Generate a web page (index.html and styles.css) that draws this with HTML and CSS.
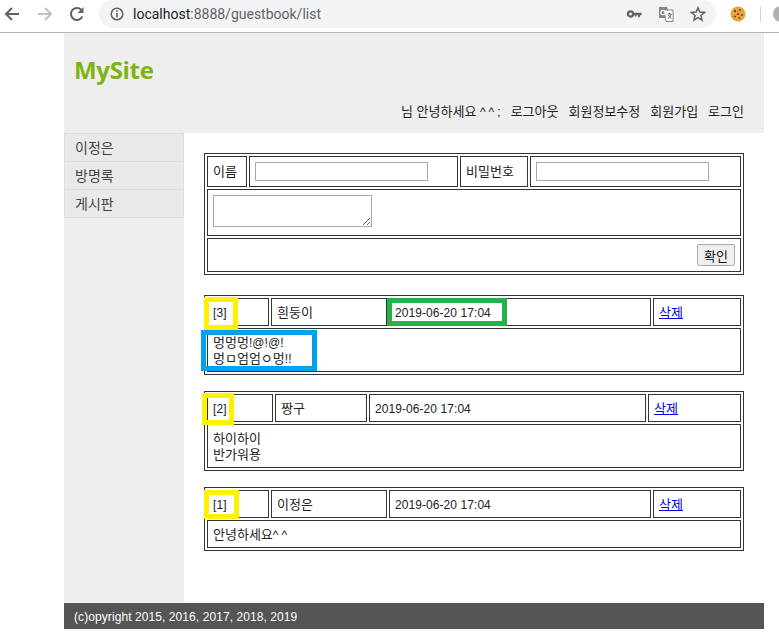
FILE: index.html
```html
<!DOCTYPE html>
<html lang="ko">
<head>
    <meta charset="UTF-8">
    <title>MySite</title>
    <link rel="stylesheet" href="styles.css">
</head>
<body>
    <div class="toolbar">
        <svg class="tool-icon back" width="16" height="16" viewBox="0 0 16 16"><path d="M15 8H2.500M8 2L2 8l6 6" fill="none" stroke="#5f6368" stroke-width="2"/></svg>
        <svg class="tool-icon forward" width="16" height="16" viewBox="0 0 16 16"><path d="M1 8h12.500M8 2l6 6-6 6" fill="none" stroke="#bdc1c6" stroke-width="2"/></svg>
        <svg class="tool-icon reload" width="16" height="16" viewBox="0 0 16 16"><path d="M13.400 10.500A6 6 0 1 1 12.200 3.700" fill="none" stroke="#5f6368" stroke-width="2"/><path d="M14.500 1v6h-6z" fill="#5f6368"/></svg>
        <div class="address">
            <svg class="info" width="16" height="16" viewBox="0 0 16 16"><circle cx="8" cy="8" r="5.800" fill="none" stroke="#5f6368" stroke-width="1.500"/><path d="M7.200 7h1.600v4.200H7.200zM7.200 4.600h1.600v1.500H7.200z" fill="#5f6368"/></svg>
            <span class="url"><span class="host">localhost</span>:8888/guestbook/list</span>
            <svg class="addr-icon key" width="16" height="16" viewBox="0 0 16 16"><circle cx="4.500" cy="8" r="2.600" fill="none" stroke="#5f6368" stroke-width="2.200"/><path d="M7 6.800h8.500v2.400h-1.600v2h-1.800v-2H10.400v1.400H8.800V9.200H7z" fill="#5f6368"/></svg>
            <svg class="addr-icon translate" width="16" height="16" viewBox="0 0 16 16"><path d="M1 1h8l1 2.500V12H1z" fill="#80868b"/><path d="M6 4h9v11.500H8z" fill="#fff" stroke="#80868b"/><circle cx="5" cy="6.500" r="2.200" fill="none" stroke="#fff" stroke-width="1.200"/><path d="M9.500 8h4M11.500 7v1M10 12.500c2-1 3-2.500 3-4.500M10.500 9c.5 1.500 1.500 2.500 3 3.500" fill="none" stroke="#5f6368"/></svg>
            <svg class="addr-icon star" width="16" height="16" viewBox="0 0 16 16"><path d="M8 1.800l1.800 4.300 4.700.4-3.600 3 1.100 4.600L8 11.700l-4 2.400 1.100-4.600-3.600-3 4.700-.4z" fill="none" stroke="#5f6368" stroke-width="1.500"/></svg>
        </div>
        <svg class="cookie" width="16" height="16" viewBox="0 0 16 16"><circle cx="8" cy="8" r="7.500" fill="#e8a33d"/><circle cx="5" cy="5" r="1.200" fill="#7a4a1c"/><circle cx="10" cy="4" r="1" fill="#7a4a1c"/><circle cx="8" cy="8" r="1.100" fill="#7a4a1c"/><circle cx="12" cy="9" r="1.100" fill="#7a4a1c"/><circle cx="5" cy="10.500" r="1.100" fill="#7a4a1c"/><circle cx="9.500" cy="12" r="1" fill="#7a4a1c"/></svg>
        <span class="divider"></span>
        <span class="avatar"></span>
    </div>

    <div class="container">
        <div class="header">
            <h1>MySite</h1>
            <ul class="user-menu">
                <li>님 안녕하세요 <span class="latin caret">^^</span><span class="latin">;</span></li>
                <li>로그아웃</li>
                <li>회원정보수정</li>
                <li>회원가입</li>
                <li>로그인</li>
            </ul>
        </div>

        <div class="wrapper">
            <ul class="navigation">
                <li>이정은</li>
                <li>방명록</li>
                <li>게시판</li>
            </ul>

            <div class="content">
                <form class="write-form">
                    <table class="board">
                        <tr class="row-input">
                            <td class="f-name">이름</td>
                            <td class="f-name-val"><input type="text" class="field"></td>
                            <td class="f-pass">비밀번호</td>
                            <td class="f-pass-val"><input type="password" class="field"></td>
                        </tr>
                        <tr class="row-text">
                            <td colspan="4"><textarea class="message"></textarea></td>
                        </tr>
                        <tr class="row-submit">
                            <td colspan="4" class="submit-cell"><button type="button" class="submit">확인</button></td>
                        </tr>
                    </table>
                </form>

                <ul class="entries">
                    <li class="entry">
                        <table class="board">
                            <tr>
                                <td class="c-no latin">[3]</td>
                                <td class="c-name">흰둥이</td>
                                <td class="c-date latin">2019-06-20 17:04</td>
                                <td class="c-del"><a href="#">삭제</a></td>
                            </tr>
                            <tr class="row-two">
                                <td colspan="4">멍멍멍<span class="latin">!@!@!</span><br>멍ㅁ엄엄ㅇ멍<span class="latin">!!</span></td>
                            </tr>
                        </table>
                        <span class="mark yellow mark-a"></span>
                        <span class="mark green"></span>
                        <span class="mark blue"></span>
                    </li>
                    <li class="entry">
                        <table class="board">
                            <tr>
                                <td class="c-no wide latin">[2]</td>
                                <td class="c-name narrow">짱구</td>
                                <td class="c-date wide latin">2019-06-20 17:04</td>
                                <td class="c-del wide"><a href="#">삭제</a></td>
                            </tr>
                            <tr class="row-two">
                                <td colspan="4">하이하이<br>반가워용</td>
                            </tr>
                        </table>
                        <span class="mark yellow mark-b"></span>
                    </li>
                    <li class="entry">
                        <table class="board">
                            <tr>
                                <td class="c-no latin">[1]</td>
                                <td class="c-name">이정은</td>
                                <td class="c-date latin">2019-06-20 17:04</td>
                                <td class="c-del"><a href="#">삭제</a></td>
                            </tr>
                            <tr class="row-one">
                                <td colspan="4">안녕하세요<span class="latin caret">^^</span></td>
                            </tr>
                        </table>
                        <span class="mark yellow mark-c"></span>
                    </li>
                </ul>
            </div>
        </div>

        <div class="footer">(c)opyright 2015, 2016, 2017, 2018, 2019</div>
    </div>
</body>
</html>
```
FILE: styles.css
```css
* {
    box-sizing: border-box;
}
body {
    margin: 0;
    font-family: "Liberation Sans", "Noto Sans CJK KR", sans-serif;
    font-size: 13px;
    color: #222;
    background-color: #fff;
    overflow: hidden;
}
ul {
    margin: 0;
    padding: 0;
    list-style: none;
}
.latin {
    font-size: 12px;
    letter-spacing: 0.07px;
}
.caret {
    letter-spacing: 3px;
}

/* browser bar */
.toolbar {
    display: flex;
    align-items: center;
    height: 33px;
    padding-bottom: 4px;
    border-bottom: 1px solid #b5b5b5;
    overflow: hidden;
}
.tool-icon {
    flex: none;
}
.back {
    margin-left: 4px;
}
.forward {
    margin-left: 17px;
}
.reload {
    margin-left: 16px;
}
.address {
    flex: none;
    display: flex;
    align-items: center;
    width: 617px;
    height: 28px;
    margin-left: 14px;
    padding-left: 10px;
    background-color: #f1f3f4;
    border-radius: 14px;
}
.url {
    flex: 1;
    margin-left: 8px;
    font-family: "Roboto", sans-serif;
    font-size: 14px;
    color: #5f6368;
}
.host {
    color: #202124;
}
.addr-icon {
    flex: none;
    margin-right: 16px;
}
.star {
    margin-right: 10px;
}
.cookie {
    flex: none;
    margin-left: 14px;
}
.divider {
    flex: none;
    width: 1px;
    height: 16px;
    margin-left: 14px;
    background-color: #d0d0d0;
}
.avatar {
    flex: none;
    width: 16px;
    height: 16px;
    margin-left: 12px;
    border-radius: 50%;
    background-color: #b0b0b0;
}

/* page */
.container {
    width: 700px;
    margin-left: 64px;
}
.header {
    display: flex;
    flex-direction: column;
    justify-content: space-between;
    height: 100px;
    padding: 21px 20px 12px 10px;
    background-color: #eee;
}
.header h1 {
    margin: 0;
    font-family: "Open Sans", sans-serif;
    font-size: 24px;
    line-height: 32px;
    font-weight: 700;
    letter-spacing: -0.3px;
    color: #7cb510;
}
.user-menu {
    display: flex;
    justify-content: flex-end;
    gap: 10px;
    line-height: 18px;
}
.wrapper {
    display: flex;
    height: 470px;
}
.navigation {
    flex: none;
    width: 120px;
    background-color: #eee;
}
.navigation li {
    height: 28px;
    padding-left: 10px;
    font-size: 14px;
    line-height: 29px;
    color: #444;
    background-color: #e9e9e9;
    border: 1px solid #ddd;
    border-top: none;
}
.navigation li:first-child {
    height: 29px;
    border-top: 1px solid #ddd;
}
.content {
    flex: 1;
    padding: 20px 0 0 20px;
}

/* tables */
.board {
    width: 540px;
    table-layout: fixed;
    border: 1px solid #333;
    border-spacing: 2px;
}
.board td {
    padding: 0 5px;
    border: 1px solid #333;
    line-height: 16px;
    height: 28px;
}
.entry .board td {
    padding-top: 2px;
}
.row-input td {
    height: 31px;
}
.row-text td {
    height: 47px;
    padding-top: 5px;
    vertical-align: top;
}
.row-submit td {
    height: 34px;
}
.entry .row-two td {
    height: 44px;
}
.f-name {
    width: 40px;
}
.f-name-val {
    width: 209px;
}
.f-pass {
    width: 68px;
}
.f-pass-val {
    width: 211px;
}
.field {
    display: block;
    width: 173px;
    height: 19px;
    padding: 0 2px;
    border: 1px solid #a9a9a9;
}
.message {
    display: block;
    width: 159px;
    height: 32px;
    border: 1px solid #a9a9a9;
}
.submit-cell {
    text-align: right;
}
.submit {
    width: 38px;
    height: 22px;
    padding: 0;
    font-family: inherit;
    font-size: 13px;
    color: #111;
    background-color: #efefef;
    border: 1px solid #aaa;
    border-radius: 2px;
}
.c-no {
    width: 62px;
}
.c-name {
    width: 116px;
}
.c-date {
    width: 262px;
}
.c-del {
    width: 88px;
}
.c-no.wide {
    width: 66px;
}
.c-name.narrow {
    width: 92px;
}
.c-date.wide {
    width: 277px;
}
.c-del.wide {
    width: 93px;
}
.board a {
    color: #00e;
}

/* guestbook list */
.entries {
    display: flex;
    flex-direction: column;
    gap: 16px;
    margin-top: 20px;
}
.entry {
    position: relative;
}

/* highlight boxes drawn over the screenshot */
.mark {
    position: absolute;
    border: 5px solid;
}
.yellow {
    border-color: #fff200;
}
.mark-a {
    left: 0;
    top: 2px;
    width: 34px;
    height: 33px;
}
.mark-b {
    left: -2px;
    top: 2px;
    width: 32px;
    height: 32px;
}
.mark-c {
    left: 0;
    top: 3px;
    width: 35px;
    height: 29px;
}
.green {
    left: 183px;
    top: 3px;
    width: 120px;
    height: 28px;
    border-color: #22b14c;
}
.blue {
    left: -3px;
    top: 35px;
    width: 116px;
    height: 41px;
    border-color: #00a2e8;
}

.footer {
    height: 26px;
    padding-left: 10px;
    font-size: 12px;
    letter-spacing: 0.08px;
    line-height: 28px;
    color: #fff;
    background-color: #555;
}
```
